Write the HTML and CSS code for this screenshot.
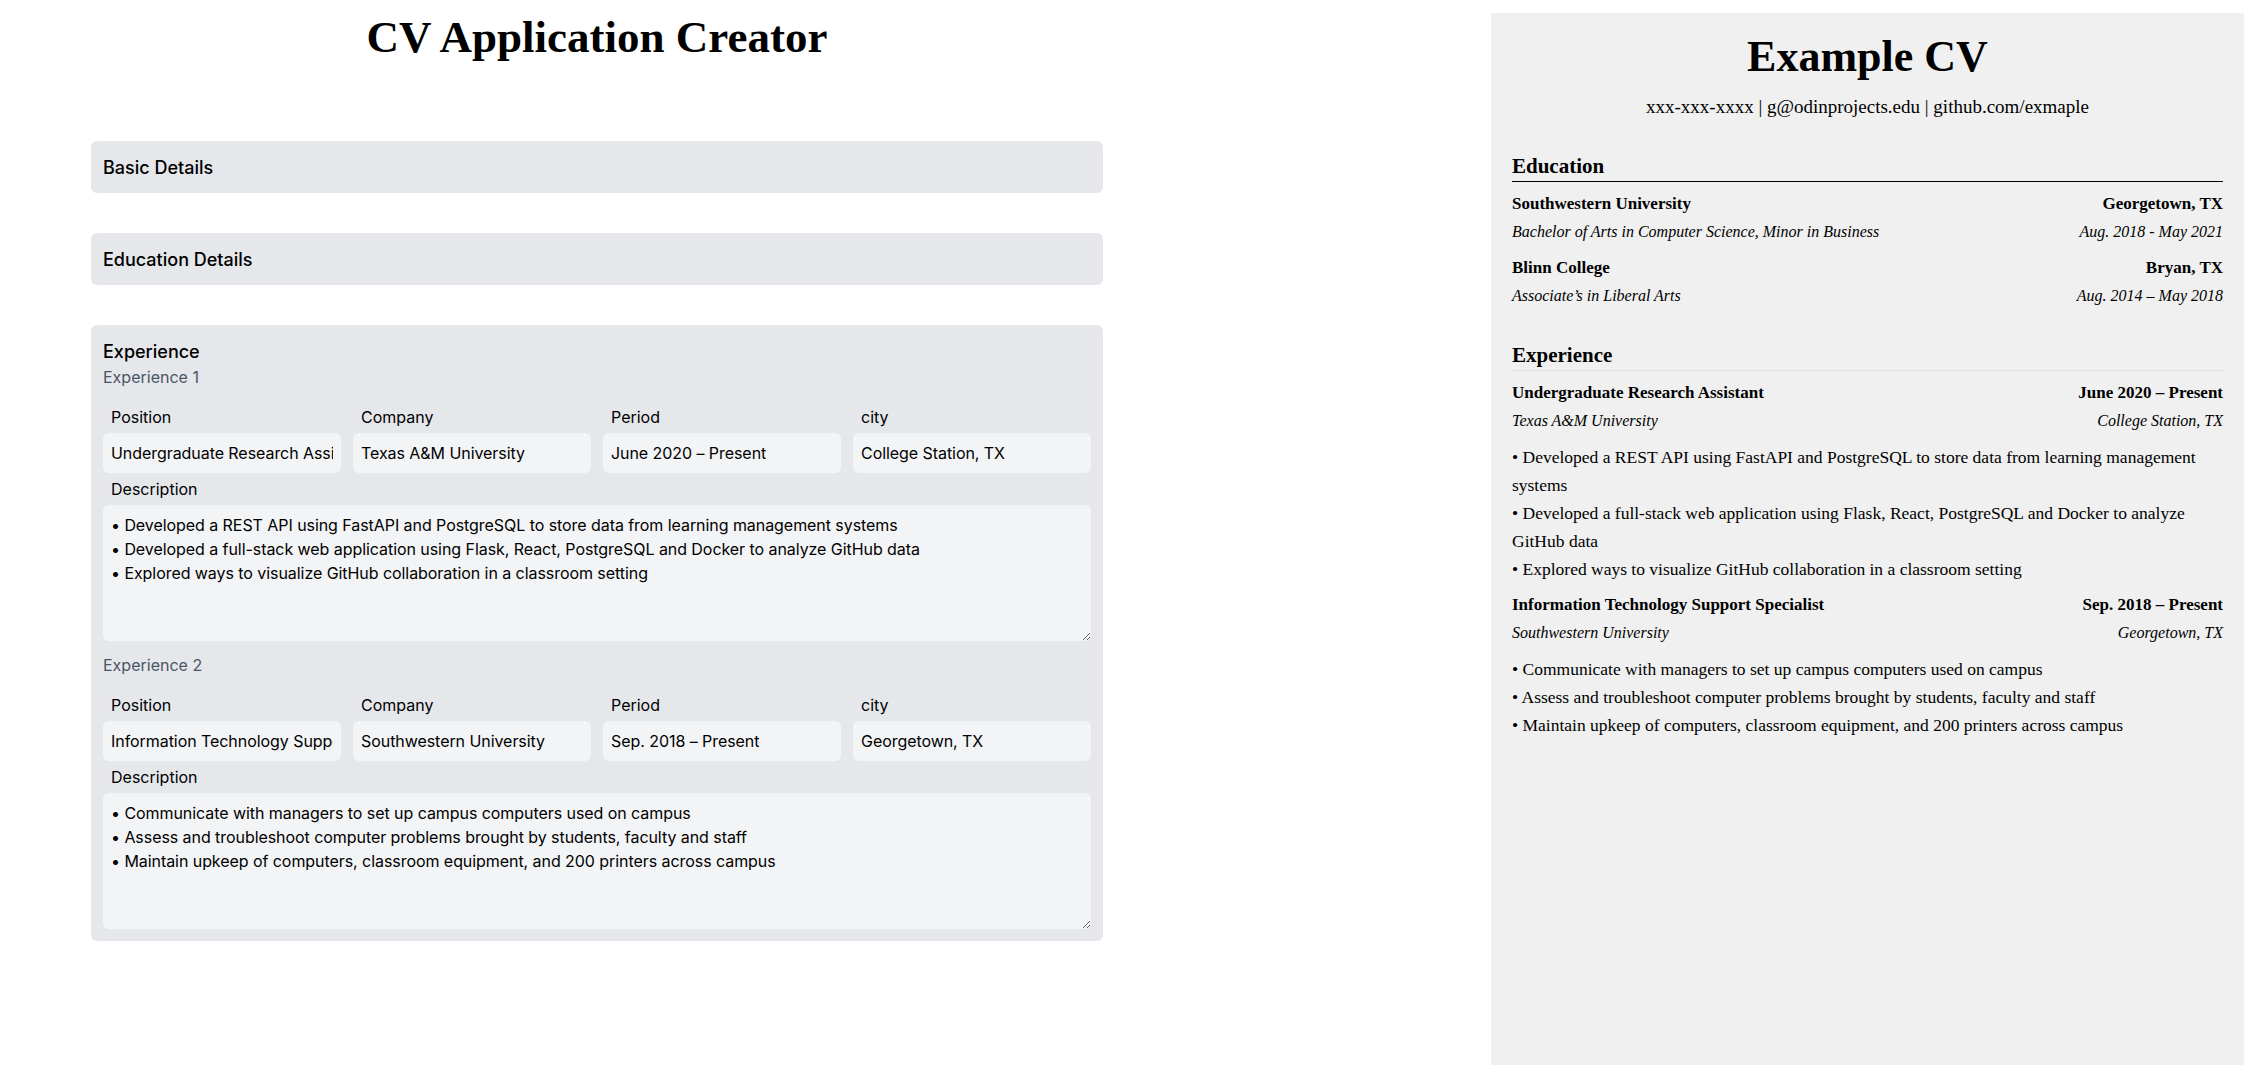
FILE: index.html
```html
<!DOCTYPE html>
<html lang="en">
<head>
<meta charset="utf-8">
<title>CV Application Creator</title>
<link rel="stylesheet" href="styles.css">
</head>
<body>
<main class="app">
  <section class="editor">
    <h1 class="app-title">CV Application Creator</h1>
    <div class="panels">
      <div class="panel"><h2 class="panel-title">Basic Details</h2></div>
      <div class="panel"><h2 class="panel-title">Education Details</h2></div>
      <div class="panel">
        <h2 class="panel-title">Experience</h2>
        <div class="exp">
          <h3 class="exp-title">Experience 1</h3>
          <div class="fields">
            <label class="field"><span class="field-label">Position</span><input class="field-input" type="text" value="Undergraduate Research Assistant"></label>
            <label class="field"><span class="field-label">Company</span><input class="field-input" type="text" value="Texas A&amp;M University"></label>
            <label class="field"><span class="field-label">Period</span><input class="field-input" type="text" value="June 2020 – Present"></label>
            <label class="field"><span class="field-label">city</span><input class="field-input" type="text" value="College Station, TX"></label>
          </div>
          <label class="field field-desc"><span class="field-label">Description</span><textarea class="field-area" rows="5">• Developed a REST API using FastAPI and PostgreSQL to store data from learning management systems
• Developed a full-stack web application using Flask, React, PostgreSQL and Docker to analyze GitHub data
• Explored ways to visualize GitHub collaboration in a classroom setting</textarea></label>
        </div>
        <div class="exp">
          <h3 class="exp-title">Experience 2</h3>
          <div class="fields">
            <label class="field"><span class="field-label">Position</span><input class="field-input" type="text" value="Information Technology Support Specialist"></label>
            <label class="field"><span class="field-label">Company</span><input class="field-input" type="text" value="Southwestern University"></label>
            <label class="field"><span class="field-label">Period</span><input class="field-input" type="text" value="Sep. 2018 – Present"></label>
            <label class="field"><span class="field-label">city</span><input class="field-input" type="text" value="Georgetown, TX"></label>
          </div>
          <label class="field field-desc"><span class="field-label">Description</span><textarea class="field-area" rows="5">• Communicate with managers to set up campus computers used on campus
• Assess and troubleshoot computer problems brought by students, faculty and staff
• Maintain upkeep of computers, classroom equipment, and 200 printers across campus</textarea></label>
        </div>
      </div>
    </div>
  </section>

  <aside class="cv">
    <h1 class="cv-name">Example CV</h1>
    <p class="cv-contact">xxx-xxx-xxxx | g@odinprojects.edu | github.com/exmaple</p>

    <section class="cv-section">
      <h2 class="cv-heading">Education</h2>
      <div class="cv-entry">
        <div class="cv-row cv-strong"><span>Southwestern University</span><span>Georgetown, TX</span></div>
        <div class="cv-row cv-em"><span>Bachelor of Arts in Computer Science, Minor in Business</span><span>Aug. 2018 - May 2021</span></div>
      </div>
      <div class="cv-entry">
        <div class="cv-row cv-strong"><span>Blinn College</span><span>Bryan, TX</span></div>
        <div class="cv-row cv-em"><span>Associate’s in Liberal Arts</span><span>Aug. 2014 – May 2018</span></div>
      </div>
    </section>

    <section class="cv-section">
      <h2 class="cv-heading cv-heading-light">Experience</h2>
      <div class="cv-entry">
        <div class="cv-row cv-strong"><span>Undergraduate Research Assistant</span><span>June 2020 – Present</span></div>
        <div class="cv-row cv-em"><span>Texas A&amp;M University</span><span>College Station, TX</span></div>
        <div class="cv-desc">
          <p>• Developed a REST API using FastAPI and PostgreSQL to store data from learning management systems</p>
          <p>• Developed a full-stack web application using Flask, React, PostgreSQL and Docker to analyze GitHub data</p>
          <p>• Explored ways to visualize GitHub collaboration in a classroom setting</p>
        </div>
      </div>
      <div class="cv-entry">
        <div class="cv-row cv-strong"><span>Information Technology Support Specialist</span><span>Sep. 2018 – Present</span></div>
        <div class="cv-row cv-em"><span>Southwestern University</span><span>Georgetown, TX</span></div>
        <div class="cv-desc">
          <p>• Communicate with managers to set up campus computers used on campus</p>
          <p>• Assess and troubleshoot computer problems brought by students, faculty and staff</p>
          <p>• Maintain upkeep of computers, classroom equipment, and 200 printers across campus</p>
        </div>
      </div>
    </section>
  </aside>
</main>
</body>
</html>
```

FILE: styles.css
```css
* { box-sizing: border-box; }

html, body {
  margin: 0;
  padding: 0;
  background: #ffffff;
  overflow: hidden;
}

body {
  font-family: Inter, "Noto Sans", sans-serif;
  color: #000;
}

.app {
  display: flex;
  align-items: flex-start;
  height: 100vh;
  padding-right: 8px;
}

/* ---------- editor ---------- */
.editor {
  flex: none;
  width: 1012px;
  margin-left: 91px;
  padding-top: 13px;
}

.app-title {
  margin: 0;
  font-family: "Liberation Serif", "Times New Roman", serif;
  font-weight: 700;
  font-size: 45px;
  line-height: 48px;
  text-align: center;
}

.panels {
  margin-top: 80px;
  display: flex;
  flex-direction: column;
  gap: 40px;
}

.panel {
  background: #e5e7eb;
  border-radius: 6px;
  padding: 12px;
}

.panel-title {
  margin: 0;
  font-size: 18px;
  line-height: 28px;
  font-weight: 500;
  padding-top: 1px;
  margin-bottom: -1px;
}

.exp + .exp { margin-top: 12px; }

.exp-title {
  margin: 0;
  font-size: 16px;
  line-height: 24px;
  font-weight: 400;
  color: #4b5563;
}

.fields {
  margin-top: 16px;
  display: grid;
  grid-template-columns: repeat(4, 1fr);
  column-gap: 12px;
}

.field {
  display: flex;
  flex-direction: column;
  gap: 4px;
  min-width: 0;
}

.field-desc { margin-top: 4px; }

.field-label {
  padding-left: 8px;
  font-size: 16px;
  line-height: 24px;
}

.field-input,
.field-area {
  display: block;
  width: 100%;
  border: none;
  outline: none;
  border-radius: 6px;
  background: #f3f4f6;
  padding: 8px;
  font-family: Inter, "Noto Sans", sans-serif;
  font-size: 16px;
  line-height: 24px;
  letter-spacing: -0.06px;
  color: #000;
  margin: 0;
}

.field-input { height: 40px; }

.field-area {
  height: 136px;
  resize: vertical;
}

/* ---------- CV preview ---------- */
.cv {
  flex: none;
  width: 753px;
  margin-left: auto;
  margin-top: 13px;
  height: calc(100vh - 13px);
  background: #f0f0f0;
  padding: 20px 21px 0 21px;
  font-family: "Liberation Serif", "Times New Roman", serif;
  color: #000;
}

.cv-name {
  margin: 0;
  font-size: 44px;
  line-height: 48px;
  font-weight: 700;
  text-align: center;
}

.cv-contact {
  margin: 12px 0 0;
  font-size: 19px;
  line-height: 28px;
  text-align: center;
}

.cv-section { margin-top: 31px; }

.cv-heading {
  margin: 0;
  font-size: 21px;
  line-height: 28px;
  font-weight: 700;
  padding-bottom: 1px;
  border-bottom: 1px solid #000;
}

.cv-heading-light { border-bottom-color: #e0e0e0; }

.cv-entry { margin-top: 8px; }

.cv-row {
  display: flex;
  justify-content: space-between;
  line-height: 28px;
}

.cv-strong {
  font-size: 17px;
  font-weight: 700;
}

.cv-em {
  font-size: 16px;
  font-style: italic;
}

.cv-desc { margin-top: 8px; }

.cv-desc p {
  margin: 0;
  font-size: 17.5px;
  line-height: 28px;
}
```
